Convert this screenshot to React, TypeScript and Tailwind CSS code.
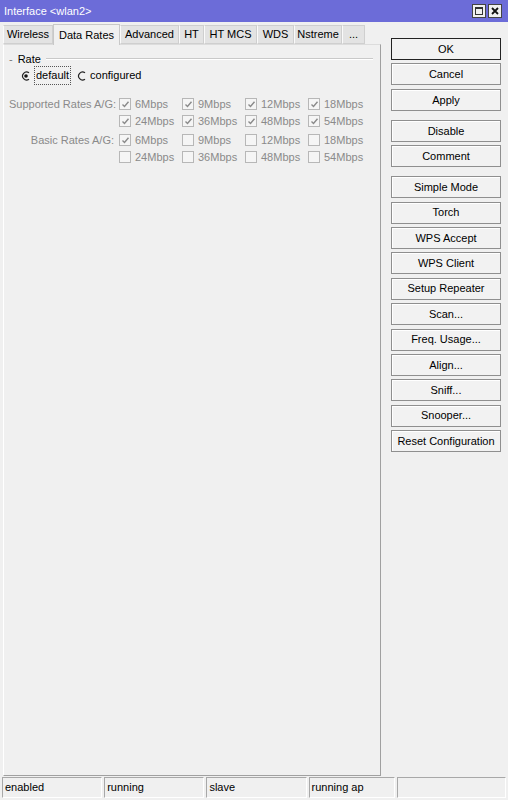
import React from "react";

const tabs = ["Wireless", "Data Rates", "Advanced", "HT", "HT MCS", "WDS", "Nstreme", "..."];
const tabWidths = [50, 67, 59, 25, 53, 37, 48, 23];

const rateRows = [
  { label: "Supported Rates A/G:", rates: ["6Mbps", "9Mbps", "12Mbps", "18Mbps"], checked: [true, true, true, true] },
  { label: "", rates: ["24Mbps", "36Mbps", "48Mbps", "54Mbps"], checked: [true, true, true, true] },
  { label: "Basic Rates A/G:", rates: ["6Mbps", "9Mbps", "12Mbps", "18Mbps"], checked: [true, false, false, false] },
  { label: "", rates: ["24Mbps", "36Mbps", "48Mbps", "54Mbps"], checked: [false, false, false, false] },
];

const buttonGroups = [
  ["OK", "Cancel", "Apply"],
  ["Disable", "Comment"],
  ["Simple Mode", "Torch", "WPS Accept", "WPS Client", "Setup Repeater", "Scan...", "Freq. Usage...", "Align...", "Sniff...", "Snooper...", "Reset Configuration"],
];

const status = [
  { text: "enabled", w: 101 },
  { text: "running", w: 101 },
  { text: "slave", w: 101 },
  { text: "running ap", w: 87 },
  { text: "", w: 110 },
];

function Check({ on }: { on: boolean }) {
  return (
    <span className="w-[12px] h-[12px] border border-[#b7b7b7] bg-[#f5f5f5] flex items-center justify-center shrink-0">
      {on && (
        <svg width="9" height="9" viewBox="0 0 9 9">
          <path d="M1.5 4.5 L3.5 6.5 L7.5 1.8" fill="none" stroke="#8a8a8a" strokeWidth="1.4" />
        </svg>
      )}
    </span>
  );
}

function Radio({ on }: { on: boolean }) {
  return (
    <svg width="10" height="10" viewBox="0 0 10 10" className="shrink-0">
      <path d="M8 1.8 A4 4 0 1 0 8 8.2" fill="none" stroke="#222" strokeWidth="1.2" />
      {on && <circle cx="5" cy="5" r="1.8" fill="#111" />}
    </svg>
  );
}

export default function App() {
  return (
    <div
      className="w-[508px] h-[800px] bg-[#f0f0f0] flex flex-col text-[11px] text-black overflow-hidden"
      style={{ fontFamily: '"Liberation Sans", Arial, sans-serif' }}
    >
      <div className="h-[22px] bg-[#6c6cd8] flex items-center justify-between pl-[4px] pr-[6px] text-white shrink-0">
        <span className="text-[11px]">Interface &lt;wlan2&gt;</span>
        <div className="flex gap-[2px]">
          <span className="w-[14px] h-[14px] bg-[#f0f0f0] border border-[#444] flex items-center justify-center">
            <span className="w-[8px] h-[8px] border border-[#333] border-t-2" />
          </span>
          <span className="w-[14px] h-[14px] bg-[#f0f0f0] border border-[#444] flex items-center justify-center">
            <svg width="8" height="8" viewBox="0 0 8 8">
              <path d="M1 1 L7 7 M7 1 L1 7" stroke="#111" strokeWidth="1.8" />
            </svg>
          </span>
        </div>
      </div>

      <div className="flex flex-1 min-h-0">
        <div className="w-[378px] ml-[3px] pt-[3px] flex flex-col">
          <div className="flex h-[19px] items-end">
            {tabs.map((t, i) => (
              <div
                key={t}
                style={{ width: tabWidths[i] }}
                className={
                  i === 1
                    ? "h-[21px] -mb-px bg-[#f0f0f0] border border-b-0 border-[#c8c8c8] flex items-center justify-center z-10 relative"
                    : "h-[19px] bg-[#e3e3e3] border border-[#cfcfcf] border-l-[#fafafa] flex items-center justify-center"
                }
              >
                {t}
              </div>
            ))}
          </div>
          <div className="flex-1 mb-[1px] border border-l-white border-t-[#dcdcdc] border-r-[#a0a0a0] border-b-[#a0a0a0] bg-[#f0f0f0] pt-[6px] px-[5px]">
            <div className="flex items-center gap-[5px]">
              <span className="text-[#777]">-</span>
              <span>Rate</span>
              <div className="flex-1 mr-[2px] h-[2px] border-t border-[#c9c9c9] border-b border-b-white" />
            </div>
            <div className="flex items-center ml-[12px] h-[16px]">
              <Radio on />
              <span className="ml-[3px] px-[1px] border border-dotted border-[#555]">default</span>
              <span className="ml-[6px]"><Radio on={false} /></span>
              <span className="ml-[3px]">configured</span>
            </div>
            <div className="mt-[12px] flex flex-col">
              {rateRows.map((row, ri) => (
                <div key={ri} className={"flex items-center h-[17px] " + (ri === 2 ? "mt-[2px]" : "")}>
                  <span className="w-[110px] whitespace-nowrap text-right text-[#8a8a8a] pr-[5px]">{row.label}</span>
                  {row.rates.map((r, ci) => (
                    <div key={r} className="w-[63px] flex items-center gap-[4px]">
                      <Check on={row.checked[ci]} />
                      <span className="text-[#8a8a8a]">{r}</span>
                    </div>
                  ))}
                </div>
              ))}
            </div>
          </div>
        </div>

        <div className="ml-[10px] mt-[16px] w-[110px] flex flex-col gap-[9px]">
          {buttonGroups.map((g, gi) => (
            <div key={gi} className="flex flex-col gap-[3.4px]">
              {g.map((b) => (
                <div
                  key={b}
                  className={
                    "h-[22px] flex items-center justify-center bg-[#f2f2f2] " +
                    (b === "OK" ? "border-[1.5px] border-[#222]" : "border border-[#8f8f8f] shadow-[inset_1px_1px_0_#fff]")
                  }
                >
                  {b}
                </div>
              ))}
            </div>
          ))}
        </div>
      </div>

      <div className="h-[22px] flex gap-[2px] px-[2px] mb-[1px] shrink-0">
        {status.map((s, i) => (
          <div
            key={i}
            style={{ width: s.w }}
            className="h-[21px] flex items-center pl-[2px] border border-t-[#a8a8a8] border-l-[#a8a8a8] border-r-white border-b-white"
          >
            {s.text}
          </div>
        ))}
      </div>
    </div>
  );
}
